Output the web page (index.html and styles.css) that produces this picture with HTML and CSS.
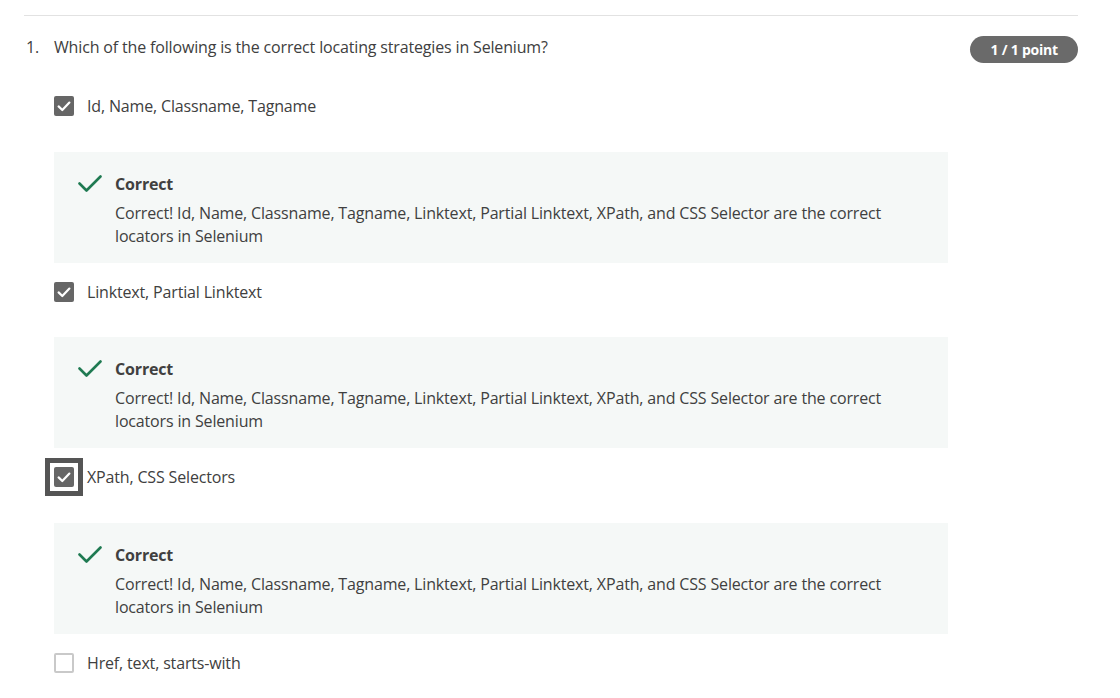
FILE: index.html
```html
<!DOCTYPE html>
<html lang="en">
<head>
<meta charset="utf-8">
<title>Quiz question</title>
<link rel="stylesheet" href="styles.css">
</head>
<body>
<div class="page">
  <hr class="divider">
  <div class="question">
    <span class="qnum">1.</span>
    <span class="qtext">Which of the following is the correct locating strategies in Selenium?</span>
    <span class="badge">1 / 1 point</span>
  </div>
  <div class="options">
    <div class="option">
      <span class="box checked"><svg viewBox="0 0 20 20" width="20" height="20"><path d="M4.6 10.4 L8.3 14 L15.4 6.6" fill="none" stroke="#fff" stroke-width="2.2" stroke-linecap="round" stroke-linejoin="round"/></svg></span>
      <span class="label">Id, Name, Classname, Tagname</span>
    </div>
    <div class="feedback">
      <svg class="ok" viewBox="0 0 24 20" width="24" height="20"><path d="M1.5 9.5 L8.5 16.5 L22.5 2.5" fill="none" stroke="#1f7a52" stroke-width="2.6" stroke-linecap="round" stroke-linejoin="round"/></svg>
      <div class="fb-body">
        <div class="fb-title">Correct</div>
        <div class="fb-text">Correct! Id, Name, Classname, Tagname, Linktext, Partial Linktext, XPath, and CSS Selector are the correct locators in Selenium</div>
      </div>
    </div>
    <div class="option">
      <span class="box checked"><svg viewBox="0 0 20 20" width="20" height="20"><path d="M4.6 10.4 L8.3 14 L15.4 6.6" fill="none" stroke="#fff" stroke-width="2.2" stroke-linecap="round" stroke-linejoin="round"/></svg></span>
      <span class="label">Linktext, Partial Linktext</span>
    </div>
    <div class="feedback">
      <svg class="ok" viewBox="0 0 24 20" width="24" height="20"><path d="M1.5 9.5 L8.5 16.5 L22.5 2.5" fill="none" stroke="#1f7a52" stroke-width="2.6" stroke-linecap="round" stroke-linejoin="round"/></svg>
      <div class="fb-body">
        <div class="fb-title">Correct</div>
        <div class="fb-text">Correct! Id, Name, Classname, Tagname, Linktext, Partial Linktext, XPath, and CSS Selector are the correct locators in Selenium</div>
      </div>
    </div>
    <div class="option focused">
      <span class="focus-ring"><span class="box checked"><svg viewBox="0 0 20 20" width="20" height="20"><path d="M4.6 10.4 L8.3 14 L15.4 6.6" fill="none" stroke="#fff" stroke-width="2.2" stroke-linecap="round" stroke-linejoin="round"/></svg></span></span>
      <span class="label">XPath, CSS Selectors</span>
    </div>
    <div class="feedback">
      <svg class="ok" viewBox="0 0 24 20" width="24" height="20"><path d="M1.5 9.5 L8.5 16.5 L22.5 2.5" fill="none" stroke="#1f7a52" stroke-width="2.6" stroke-linecap="round" stroke-linejoin="round"/></svg>
      <div class="fb-body">
        <div class="fb-title">Correct</div>
        <div class="fb-text">Correct! Id, Name, Classname, Tagname, Linktext, Partial Linktext, XPath, and CSS Selector are the correct locators in Selenium</div>
      </div>
    </div>
    <div class="option">
      <span class="box"></span>
      <span class="label">Href, text, starts-with</span>
    </div>
  </div>
</div>
</body>
</html>
```
FILE: styles.css
```css
html, body {
  margin: 0;
  padding: 0;
  background: #fff;
}
body {
  font-family: "Open Sans", "DejaVu Sans", sans-serif;
  color: #404040;
  font-size: 16px;
  letter-spacing: -0.16px;
}
.page {
  padding: 0 42px 0 24px;
}
.divider {
  margin: 15px 0 0 0;
  border: 0;
  border-top: 1px solid #e2e2e2;
  height: 0;
}
.question {
  display: flex;
  align-items: center;
  margin-top: 20px;
  height: 27px;
}
.qnum {
  width: 28px;
  padding-left: 2px;
  line-height: 24px;
  margin-top: -5px;
}
.qtext {
  flex: 1;
  line-height: 24px;
  margin-top: -5px;
}
.badge {
  background: #6a6a6a;
  color: #fff;
  font-weight: 700;
  font-size: 14px;
  border-radius: 14px;
  height: 27px;
  line-height: 27px;
  padding: 0 20px;
  letter-spacing: -0.2px;
}
.options {
  padding-left: 30px;
  padding-top: 33px;
}
.option {
  display: flex;
  align-items: center;
  height: 20px;
}
.box {
  width: 20px;
  height: 20px;
  box-sizing: border-box;
  border-radius: 2px;
  border: 2px solid #c9c9c9;
  display: inline-flex;
  flex: none;
}
.box.checked {
  background: #666;
  border: 0;
}
.label {
  margin-left: 13px;
  line-height: 24px;
}
.focused {
  margin-left: -9px;
}
.focus-ring {
  display: inline-flex;
  padding: 4px;
  border: 5px solid #555;
  background: #fff;
  flex: none;
}
.focused .label {
  margin-left: 4px;
}
.feedback {
  display: flex;
  align-items: flex-start;
  background: #f5f8f7;
  width: 894px;
  box-sizing: border-box;
  padding: 21px 24px 15px 24px;
  margin: 35.6px 0 19px 0;
}
.ok {
  flex: none;
  margin-top: 1px;
}
.fb-body {
  margin-left: 13px;
}
.fb-title {
  font-weight: 700;
  line-height: 23px;
  margin-bottom: 6px;
}
.fb-text {
  line-height: 23px;
  width: 790px;
}
```
